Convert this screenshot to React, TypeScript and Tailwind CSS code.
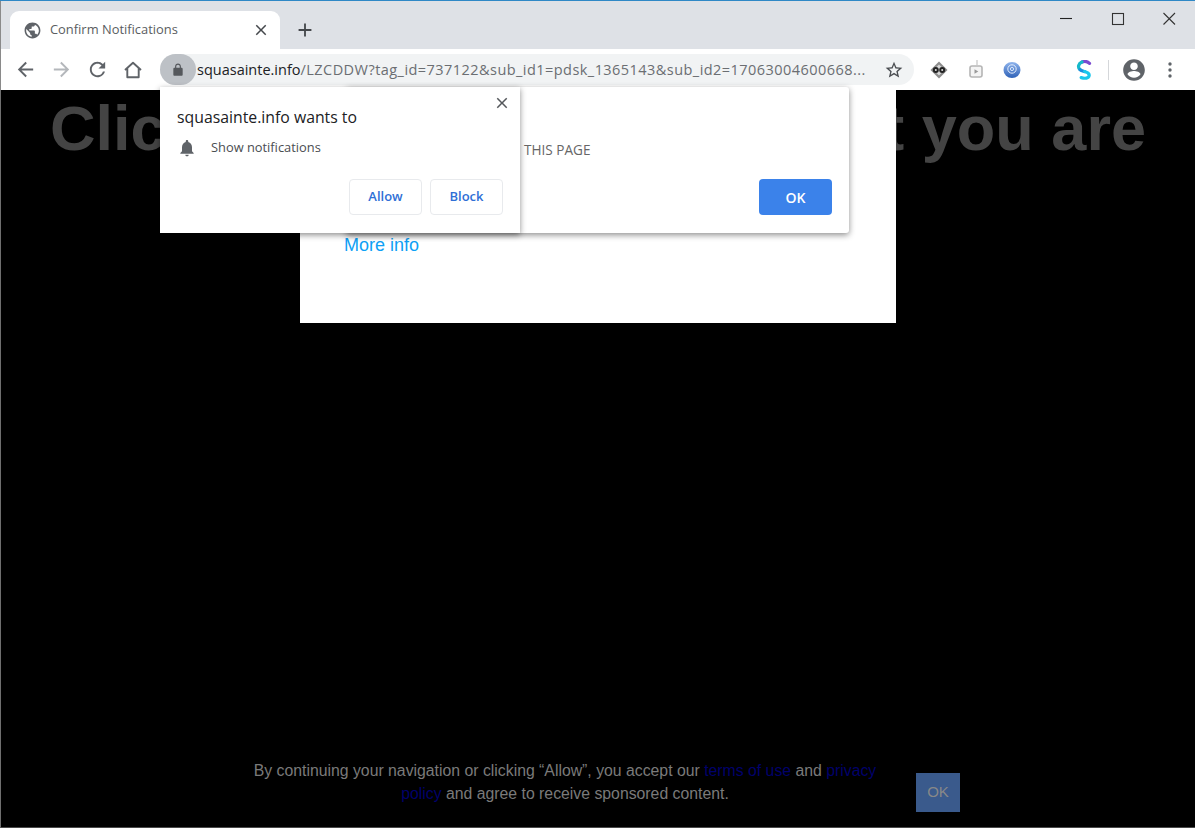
const UI = "font-['Open_Sans',sans-serif]";

const Icon = ({ d, size = 24, className = "" }: { d: string; size?: number; className?: string }) => (
  <svg width={size} height={size} viewBox="0 0 24 24" className={`fill-current shrink-0 ${className}`}>
    <path d={d} />
  </svg>
);

const ICONS = {
  globe:
    "M12 2C6.48 2 2 6.48 2 12s4.48 10 10 10 10-4.48 10-10S17.52 2 12 2zm-1 17.93c-3.95-.49-7-3.85-7-7.93 0-.62.08-1.21.21-1.79L9 15v1c0 1.1.9 2 2 2v1.93zm6.9-2.54c-.26-.81-1-1.39-1.9-1.39h-1v-3c0-.55-.45-1-1-1H8v-2h2c.55 0 1-.45 1-1V7h2c1.1 0 2-.9 2-2v-.41c2.93 1.19 5 4.06 5 7.41 0 2.08-.8 3.97-2.1 5.39z",
  close: "M19 6.41 17.59 5 12 10.59 6.41 5 5 6.41 10.59 12 5 17.59 6.41 19 12 13.41 17.59 19 19 17.59 13.41 12z",
  plus: "M19 13h-6v6h-2v-6H5v-2h6V5h2v6h6v2z",
  back: "M20 11H7.83l5.59-5.59L12 4l-8 8 8 8 1.41-1.41L7.83 13H20v-2z",
  forward: "M12 4l-1.41 1.41L16.17 11H4v2h12.17l-5.58 5.59L12 20l8-8z",
  reload:
    "M17.65 6.35A7.96 7.96 0 0 0 12 4c-4.42 0-7.99 3.58-7.99 8s3.57 8 7.99 8c3.73 0 6.84-2.55 7.73-6h-2.08A5.99 5.99 0 0 1 12 18c-3.31 0-6-2.69-6-6s2.69-6 6-6c1.66 0 3.14.69 4.22 1.78L13 11h7V4l-2.35 2.35z",
  lock:
    "M18 8h-1V6c0-2.76-2.24-5-5-5S7 3.24 7 6v2H6c-1.1 0-2 .9-2 2v10c0 1.1.9 2 2 2h12c1.1 0 2-.9 2-2V10c0-1.1-.9-2-2-2zM9 6c0-1.66 1.34-3 3-3s3 1.34 3 3v2H9V6z",
  star:
    "M22 9.24l-7.19-.62L12 2 9.19 8.63 2 9.24l5.46 4.73L5.82 21 12 17.27 18.18 21l-1.63-7.03L22 9.24zM12 15.4l-3.76 2.27 1-4.28-3.32-2.88 4.38-.38L12 6.1l1.71 4.04 4.38.38-3.32 2.88 1 4.28L12 15.4z",
  bell:
    "M12 22c1.1 0 2-.9 2-2h-4c0 1.1.9 2 2 2zm6-6v-5c0-3.07-1.63-5.64-4.5-6.32V4c0-.83-.67-1.5-1.5-1.5s-1.5.67-1.5 1.5v.68C7.64 5.36 6 7.92 6 11v5l-2 2v1h16v-1l-2-2z",
  account:
    "M12 2C6.48 2 2 6.48 2 12s4.48 10 10 10 10-4.48 10-10S17.52 2 12 2zm0 3c1.93 0 3.5 1.57 3.5 3.5S13.93 12 12 12s-3.5-1.57-3.5-3.5S10.07 5 12 5zm0 14.2a7.2 7.2 0 0 1-6-3.22c.03-1.99 4-3.08 6-3.08s5.97 1.09 6 3.08a7.2 7.2 0 0 1-6 3.22z",
};

const HomeIcon = () => (
  <svg width="22" height="22" viewBox="0 0 22 22" fill="none" className="shrink-0 ml-[13px] text-[#5f6368]">
    <path d="M3 11 11 3.8 19 11M5.3 9v9.2h11.4V9" stroke="currentColor" strokeWidth="1.9" strokeLinejoin="round" />
  </svg>
);

const MaskIcon = () => (
  <svg width="20" height="20" viewBox="0 0 20 20" className="shrink-0">
    <path d="M10 1.5 18.5 10 10 18.5 1.5 10z" fill="#8d8d8d" />
    <path d="M10 4.5 15.5 10 10 15.5 4.5 10z" fill="#d9d9d9" />
    <circle cx="6.8" cy="10" r="3" fill="#222" />
    <circle cx="13.2" cy="10" r="3" fill="#222" />
    <circle cx="6.8" cy="10" r="1" fill="#ddd" />
    <circle cx="13.2" cy="10" r="1" fill="#ddd" />
  </svg>
);

const TvIcon = () => (
  <svg width="20" height="22" viewBox="0 0 20 22" className="shrink-0" fill="none">
    <path d="M11 1v5" stroke="#b9b9b9" strokeWidth="1" />
    <rect x="4" y="7" width="12" height="11" rx="2" stroke="#b5b5b5" strokeWidth="1.6" fill="#f4f4f4" />
    <path d="M8.5 10.2v4.6l3.8-2.3z" fill="#9a9a9a" />
  </svg>
);

const MailDisc = () => (
  <svg width="18" height="18" viewBox="0 0 18 18" className="shrink-0">
    <defs>
      <linearGradient id="disc" x1="0" y1="0" x2="0" y2="1">
        <stop offset="0" stopColor="#8fb4ec" />
        <stop offset="1" stopColor="#2f62b8" />
      </linearGradient>
    </defs>
    <ellipse cx="9" cy="9" rx="8.5" ry="8" fill="url(#disc)" />
    <circle cx="9" cy="8" r="4.2" fill="none" stroke="#e3edfb" strokeWidth="1" />
    <circle cx="9" cy="8" r="1.6" fill="none" stroke="#e3edfb" strokeWidth="0.9" />
  </svg>
);

const SLogo = () => (
  <svg width="18" height="20" viewBox="0 0 18 20" className="shrink-0" fill="none">
    <path d="M14.5 3.4C12.6 1.6 9.6 1 7 2" stroke="#7a4ad0" strokeWidth="3.2" strokeLinecap="round" />
    <path d="M7 2C3.4 3.4 2.4 7.4 5 9.6" stroke="#16b9c9" strokeWidth="3.2" strokeLinecap="round" />
    <path d="M5 9.6c1.4 1 3 1.4 4.6 2" stroke="#1c8fe0" strokeWidth="3.2" strokeLinecap="round" />
    <path d="M9.6 11.6c3 1 4.8 1.6 4.6 3.8-.3 3-4.2 3.4-8 2.2" stroke="#1cc7ec" strokeWidth="3.2" strokeLinecap="round" />
  </svg>
);

const Pill = ({ children }: { children: string }) => (
  <button className="w-[73px] h-[36px] rounded-[4px] border border-[#e8eaed] bg-white text-[13px] font-semibold text-[#2f6fd6] flex items-center justify-center">
    {children}
  </button>
);

export default function App() {
  return (
    <div className={`relative w-[1195px] h-[828px] flex flex-col overflow-hidden bg-black border-t border-t-[#2f88c6] ${UI}`}>
      {/* tab strip */}
      <div className="h-[48px] shrink-0 bg-[#dee1e6] flex items-end pl-[9px] border-l border-l-[#8a8a8a]">
        <div className="w-[270px] h-[38px] bg-white rounded-t-[9px] flex items-center pl-[13px] pr-[10px]">
          <Icon d={ICONS.globe} size={19} className="text-[#5f6368]" />
          <span className="ml-[8px] flex-1 text-[12.9px] text-[#5a5d61]">Confirm Notifications</span>
          <Icon d={ICONS.close} size={18} className="text-[#45484c]" />
        </div>
        <div className="h-[38px] flex items-center ml-[14px]">
          <Icon d={ICONS.plus} size={22} className="text-[#44474b]" />
        </div>
        <div className="flex-1 h-[48px] flex items-start justify-end pt-[6px] pr-[17px] gap-[33px]">
          <svg width="18" height="24" viewBox="0 0 18 24" className="text-[#222] mr-[1px]">
            <path d="M3 11.5h12" stroke="currentColor" strokeWidth="1.1" />
          </svg>
          <svg width="18" height="24" viewBox="0 0 18 24">
            <rect x="3.5" y="6.5" width="11" height="11" fill="none" stroke="#333" strokeWidth="1.1" />
          </svg>
          <svg width="18" height="24" viewBox="0 0 18 24">
            <path d="M3.5 6 15 17.5M15 6 3.5 17.5" stroke="#333" strokeWidth="1.1" />
          </svg>
        </div>
      </div>

      {/* toolbar */}
      <div className="h-[41px] shrink-0 bg-white flex items-center border-l border-l-[#8a8a8a]">
        <div className="flex items-center pl-[13px] w-[159px]">
          <Icon d={ICONS.back} size={23} className="text-[#5f6368]" />
          <Icon d={ICONS.forward} size={23} className="ml-[13px] text-[#b4b7bb]" />
          <Icon d={ICONS.reload} size={23} className="ml-[13px] text-[#5f6368]" />
          <HomeIcon />
        </div>
        <div className="w-[754px] h-[31px] rounded-full bg-[#f1f3f4] flex items-center pr-[10px]">
          <div className="w-[36px] h-[31px] rounded-full bg-[#bdc1c6] flex items-center justify-center shrink-0">
            <Icon d={ICONS.lock} size={14} className="text-[#55585c]" />
          </div>
          <span className="ml-[1px] flex-1 text-[14.5px] whitespace-nowrap overflow-hidden text-[#6b6e72]">
            <span className="text-[#202124]">squasainte.info</span>
            <span className="tracking-[0.45px]">/LZCDDW?tag_id=737122&amp;sub_id1=pdsk_1365143&amp;sub_id2=17063004600668...</span>
          </span>
          <Icon d={ICONS.star} size={20} className="text-[#4a4d51]" />
        </div>
        <div className="flex-1 flex items-center pl-[15px]">
          <MaskIcon />
          <div className="ml-[17px]"><TvIcon /></div>
          <div className="ml-[17px]"><MailDisc /></div>
          <div className="ml-[54px]"><SLogo /></div>
          <div className="ml-[15px] w-px h-[20px] bg-[#d5d7da]" />
          <Icon d={ICONS.account} size={26} className="ml-[12px] text-[#5f6368]" />
          <svg width="4" height="16" viewBox="0 0 4 16" className="ml-[21px] text-[#5f6368] fill-current">
            <circle cx="2" cy="2" r="1.7" />
            <circle cx="2" cy="8" r="1.7" />
            <circle cx="2" cy="14" r="1.7" />
          </svg>
        </div>
      </div>

      {/* page */}
      <div className="relative flex-1 flex flex-col bg-black border-l border-l-[#6f6f6f] border-b border-b-[#4a4a4a] font-['Liberation_Sans',Arial,sans-serif]">
        <h1 className="mt-[2px] text-center text-[63px] leading-[72px] font-bold text-[#444] whitespace-nowrap">
          Click "Allow" to confirm that you are
        </h1>
        <div className="flex-1" />
        <div className="flex items-end pl-[249px] pb-[15px]">
          <p className="w-[630px] mb-[7px] text-center text-[15.8px] leading-[23px] text-[#7a7a7a]">
            By continuing your navigation or clicking “Allow”, you accept our <a className="text-[#00006b]">terms of use</a> and <a className="text-[#00006b]">privacy policy</a> and agree to receive sponsored content.
          </p>
          <button className="ml-[36px] w-[44px] h-[39px] bg-[#3a5a8c] text-[#888] text-[15px] flex items-center justify-center">OK</button>
        </div>

        {/* white modal under the dialogs */}
        <div className="absolute left-[299px] top-0 w-[596px] h-[233px] bg-white pl-[44px] pt-[144px]">
          <a className="text-[18px] leading-[22px] text-[#0ea0f5]">More info</a>
        </div>
      </div>

      {/* site alert dialog */}
      <div className={`absolute left-[346px] top-[86px] w-[503px] h-[146px] bg-white rounded-[3px] shadow-[0_2px_6px_rgba(0,0,0,0.45)] flex flex-col pl-[178px] pr-[17px] pt-[53px] ${UI}`}>
        <span className="text-[13.6px] leading-[19px] text-[#666]">THIS PAGE</span>
        <button className="self-end mt-[20px] w-[73px] h-[36px] rounded-[4px] bg-[#3b82ea] text-white text-[14px] font-semibold flex items-center justify-center">OK</button>
      </div>

      {/* permission prompt */}
      <div className={`absolute left-[160px] top-[86px] w-[360px] h-[146px] bg-white shadow-[0_2px_6px_rgba(0,0,0,0.45)] pl-[17px] pr-[17px] pt-[18px] flex flex-col ${UI}`}>
        <div className="flex items-start justify-between -mr-[8px]">
          <span className="text-[15.8px] leading-[24px] text-[#202124]">squasainte.info wants to</span>
          <Icon d={ICONS.close} size={18} className="-mt-[11px] text-[#55585c]" />
        </div>
        <div className="flex items-center mt-[9px] h-[20px]">
          <Icon d={ICONS.bell} size={20} className="text-[#5f6368]" />
          <span className="ml-[14px] text-[12.85px] text-[#4a4d51]">Show notifications</span>
        </div>
        <div className="flex justify-end gap-[8px] mt-[21px]">
          <Pill>Allow</Pill>
          <Pill>Block</Pill>
        </div>
      </div>
    </div>
  );
}
